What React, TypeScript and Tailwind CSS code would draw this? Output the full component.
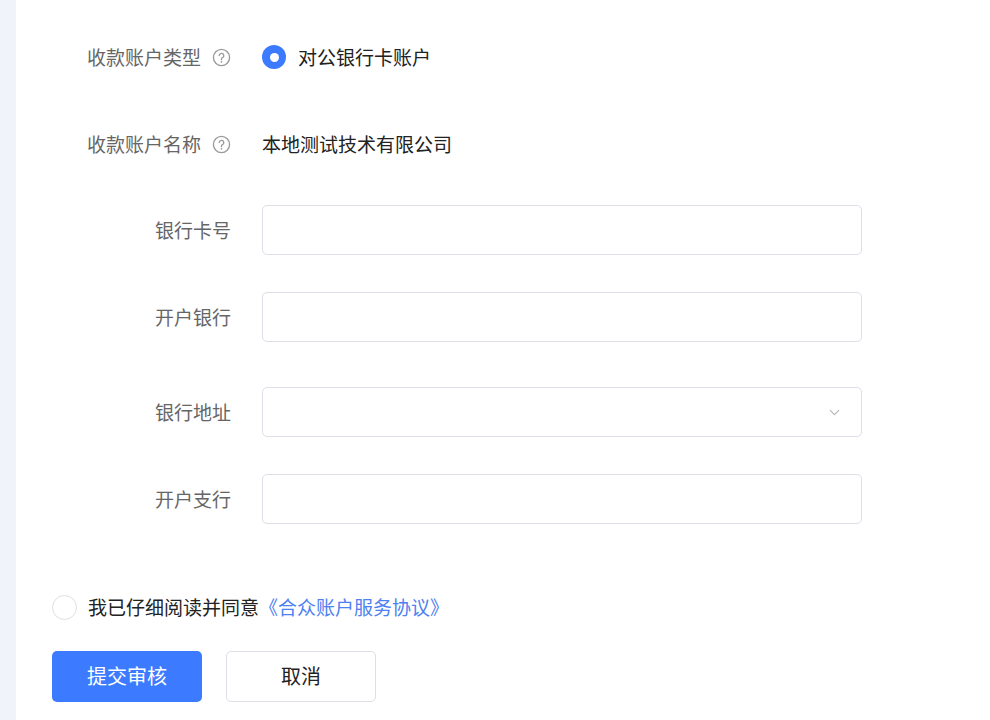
import { ChevronDown } from 'lucide-react';

const Help = () => (
  <svg width="19" height="19" viewBox="0 0 20 20" className="ml-[11px] text-[#9a9a9a]">
    <circle cx="10" cy="10" r="8.5" fill="none" stroke="currentColor" strokeWidth="1.4" />
    <path d="M7.6 8a2.4 2.4 0 1 1 3.4 2.2c-.7.3-1 .8-1 1.5v.6" fill="none" stroke="currentColor" strokeWidth="1.4" strokeLinecap="round" />
    <circle cx="10" cy="14.6" r="0.9" fill="currentColor" />
  </svg>
);

const Row = ({ label, help, mt, children }: { label: string; help?: boolean; mt: string; children: React.ReactNode }) => (
  <div className={`flex h-[50px] items-center ${mt}`}>
    <div className="flex w-[215px] items-center justify-end text-[19px] text-[#666]">
      {label}
      {help && <Help />}
    </div>
    <div className="ml-[31px] flex items-center">{children}</div>
  </div>
);

const Input = ({ select }: { select?: boolean }) => (
  <div className="flex h-[50px] w-[600px] items-center justify-end rounded-[5px] border border-[#dcdfe6] bg-white pr-[18px]">
    {select && <ChevronDown size={17} strokeWidth={1.5} className="text-[#b0b3b8]" />}
  </div>
);

export default function App() {
  return (
    <div className="flex h-[720px] w-[990px] bg-white" style={{ fontFamily: '"Noto Sans CJK SC", sans-serif' }}>
      <div className="w-[16px] bg-[#f0f3f9]" />
      <div className="flex flex-col">
        <Row label="收款账户类型" help mt="mt-[32px]">
          <div className="flex items-center gap-[12px] text-[19px] text-[#222]">
            <span className="flex h-[24px] w-[24px] items-center justify-center rounded-full bg-[#3c7bff]">
              <span className="h-[9px] w-[9px] rounded-full bg-white" />
            </span>
            对公银行卡账户
          </div>
        </Row>
        <Row label="收款账户名称" help mt="mt-[37px]">
          <span className="text-[19px] text-[#222]">本地测试技术有限公司</span>
        </Row>
        <Row label="银行卡号" mt="mt-[36px]"><Input /></Row>
        <Row label="开户银行" mt="mt-[37px]"><Input /></Row>
        <Row label="银行地址" mt="mt-[45px]"><Input select /></Row>
        <Row label="开户支行" mt="mt-[37px]"><Input /></Row>
        <div className="ml-[36px] mt-[69px] flex items-center text-[19px]">
          <span className="h-[25px] w-[25px] rounded-full border border-[#dcdfe6]" />
          <span className="ml-[11px] text-[#222]">我已仔细阅读并同意</span>
          <span className="text-[#4d80f0]">《合众账户服务协议》</span>
        </div>
        <div className="ml-[36px] mt-[29px] flex gap-[24px]">
          <button className="h-[51px] w-[150px] rounded-[5px] bg-[#3c7bff] text-[20px] text-white">提交审核</button>
          <button className="h-[51px] w-[150px] rounded-[5px] border border-[#dcdfe6] bg-white text-[20px] text-[#222]">取消</button>
        </div>
      </div>
    </div>
  );
}
